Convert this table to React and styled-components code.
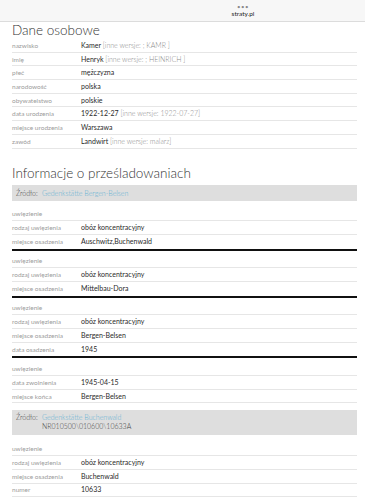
import React from 'react';
import styled, { createGlobalStyle } from 'styled-components';

const GlobalStyle = createGlobalStyle`
  *, *::before, *::after {
    box-sizing: border-box;
  }
  body {
    margin: 0;
    background: #fff;
    font-family: Lato, "Open Sans", sans-serif;
    color: #333;
  }
`;

const TopBar = styled.div`
  height: 22px;
  padding-left: 121px;
  background: #f7f7f7;
  border-bottom: 1px solid #dcdcdc;
  display: flex;
  flex-direction: column;
  align-items: center;
  justify-content: center;
  line-height: 1;
`;

const Dots = styled.div`
  font-size: 6px;
  letter-spacing: 0.5px;
  color: #888;
  height: 7px;
`;

const Domain = styled.div`
  font-size: 6.5px;
  color: #222;
`;

const Page = styled.div`
  padding: 0 8px 0 12px;
`;

const Heading = styled.h2`
  margin: ${(p) => p.$top}px 0 0;
  font-size: 13.5px;
  font-weight: 300;
  line-height: 16px;
  color: #333;
`;

const Table = styled.div`
  margin-top: 1px;
`;

const Row = styled.div`
  display: grid;
  grid-template-columns: 69px 1fr;
  height: 13.7px;
  align-items: center;
  border-bottom: 1px solid #e6e6e6;
  font-size: 7px;
  line-height: 9px;
  white-space: nowrap;
`;

const Label = styled.span`
  color: #9c9c9c;
  font-size: 6.5px;
  font-weight: 400;
`;

const Value = styled.span`
  color: #2a2a2a;
  font-weight: 400;
`;

const Alt = styled.span`
  color: #8a8a8a;
  font-weight: 300;
`;

const Source = styled.div`
  margin-top: ${(p) => p.$top}px;
  background: #dedede;
  padding: ${(p) => (p.$tall ? '3px 4px 4px' : '4px 4px 3px')};
  display: grid;
  grid-template-columns: 26px 1fr;
  font-size: 7px;
  line-height: 9px;
`;

const SourceLabel = styled.span`
  color: #444;
  font-weight: 300;
`;

const SourceLink = styled.span`
  color: #62b0d3;
  font-weight: 300;
  display: block;
`;

const SourceCode = styled.span`
  color: #444;
  font-weight: 300;
  display: block;
`;

const Group = styled.div`
  margin-top: ${(p) => p.$gap}px;
  border-bottom: ${(p) => (p.$last ? 'none' : '2px solid #111')};
  & > div:last-child {
    border-bottom: ${(p) => (p.$last ? '1px solid #e6e6e6' : 'none')};
  }
`;

const personal = [
  ['nazwisko', 'Kamer', '[inne wersje: ; KAMR ]'],
  ['imię', 'Henryk', '[inne wersje: ; HEINRICH ]'],
  ['płeć', 'mężczyzna'],
  ['narodowość', 'polska'],
  ['obywatelstwo', 'polskie'],
  ['data urodzenia', '1922-12-27', '[inne wersje: 1922-07-27]'],
  ['miejsce urodzenia', 'Warszawa'],
  ['zawód', 'Landwirt', '[inne wersje: malarz]'],
];

const groupsA = [
  [['uwięzienie'], ['rodzaj uwięzienia', 'obóz koncentracyjny'], ['miejsce osadzenia', 'Auschwitz,Buchenwald']],
  [['uwięzienie'], ['rodzaj uwięzienia', 'obóz koncentracyjny'], ['miejsce osadzenia', 'Mittelbau-Dora']],
  [['uwięzienie'], ['rodzaj uwięzienia', 'obóz koncentracyjny'], ['miejsce osadzenia', 'Bergen-Belsen'], ['data osadzenia', '1945']],
  [['uwięzienie'], ['data zwolnienia', '1945-04-15'], ['miejsce końca', 'Bergen-Belsen']],
];

const groupB = [
  ['uwięzienie'],
  ['rodzaj uwięzienia', 'obóz koncentracyjny'],
  ['miejsce osadzenia', 'Buchenwald'],
  ['numer', '10633'],
];

function DataRow({ label, value, alt }) {
  return (
    <Row>
      <Label>{label}</Label>
      <Value>
        {value} {alt && <Alt>{alt}</Alt>}
      </Value>
    </Row>
  );
}

export default function App() {
  return (
    <>
      <GlobalStyle />
      <TopBar>
        <Dots>•••</Dots>
        <Domain>straty.pl</Domain>
      </TopBar>
      <Page>
        <Heading $top={0}>Dane osobowe</Heading>
        <Table>
          {personal.map(([l, v, a]) => (
            <DataRow key={l} label={l} value={v} alt={a} />
          ))}
        </Table>

        <Heading $top={16}>Informacje o prześladowaniach</Heading>
        <Source $top={4}>
          <SourceLabel>Źródło:</SourceLabel>
          <SourceLink>Gedenkstätte Bergen-Belsen</SourceLink>
        </Source>

        {groupsA.map((g, i) => (
          <Group key={i} $gap={i === 0 ? 7 : 4} $last={i === groupsA.length - 1}>
            {g.map(([l, v]) => (
              <DataRow key={l} label={l} value={v} />
            ))}
          </Group>
        ))}

        <Source $top={7} $tall>
          <SourceLabel>Źródło:</SourceLabel>
          <div>
            <SourceLink>Gedenkstätte Buchenwald</SourceLink>
            <SourceCode>NR010500\010600\10633A</SourceCode>
          </div>
        </Source>

        <Group $gap={7} $last>
          {groupB.map(([l, v]) => (
            <DataRow key={l} label={l} value={v} />
          ))}
        </Group>
      </Page>
    </>
  );
}
